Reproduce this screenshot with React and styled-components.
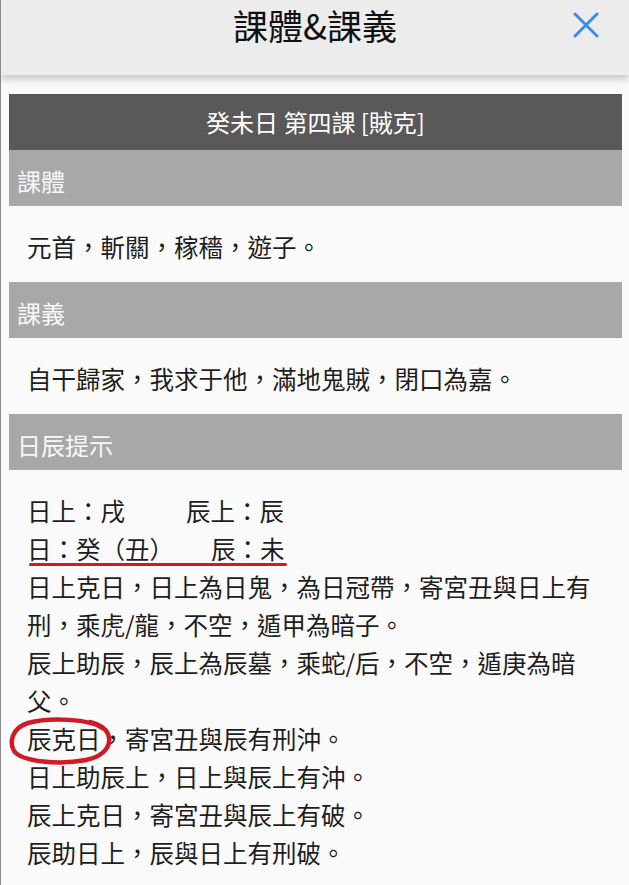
import styled, { createGlobalStyle } from "styled-components";

const GlobalStyle = createGlobalStyle`
    html, body {
        margin: 0;
        padding: 0;
        background: #fafafa;
    }
    body {
        font-family: "Noto Sans CJK TC", Roboto, "Noto Sans", sans-serif;
        color: #1e1e1e;
    }
`;

const Page = styled.div`
    min-height: 885px;
    border-left: 1px solid #8a8a8a;
    background: #fafafa;
    overflow: hidden;
`;

const Header = styled.div`
    position: relative;
    height: 75px;
    background: #ececec;
    box-shadow: 0 4px 8px rgba(0, 0, 0, 0.22);
    display: flex;
    justify-content: center;
`;

const HeaderTitle = styled.div`
    font-size: 35px;
    line-height: 50px;
    color: #111;
`;

const CloseButton = styled.div`
    position: absolute;
    right: 30px;
    top: 12px;
    width: 26px;
    height: 26px;
    cursor: pointer;
`;

const Panel = styled.div`
    margin: 19px 7px 0 8px;
`;

const LessonBar = styled.div`
    height: 56px;
    background: #595959;
    color: #fff;
    font-size: 24px;
    display: flex;
    align-items: center;
    justify-content: center;
    padding-bottom: 2px;
    box-sizing: border-box;
`;

const SectionBar = styled.div`
    height: 56px;
    background: #a8a8a8;
    color: #f8f8f8;
    font-size: 24px;
    display: flex;
    align-items: center;
    padding: 4px 0 0 8px;
    box-sizing: border-box;
`;

const SectionBody = styled.div`
    padding: ${p => (p.tall ? "22px" : "22px")} 18px ${p => (p.tall ? "30px" : "16px")} 18px;
    font-size: 24.5px;
    line-height: 38px;
    color: #1e1e1e;
`;

const Line = styled.div`
    position: relative;
`;

const Gap = styled.span`
    display: inline-block;
    width: ${p => p.w}px;
`;

const Underlined = styled.span`
    position: relative;
    display: inline-block;
    &::after {
        content: "";
        position: absolute;
        left: 2px;
        right: -2px;
        bottom: 2px;
        height: 3px;
        border-radius: 2px;
        background: #d11a28;
    }
`;

const Circled = styled.span`
    position: relative;
    display: inline-block;
`;

const Ring = styled.svg`
    position: absolute;
    left: -17px;
    top: -2px;
    width: 102px;
    height: 46px;
    overflow: visible;
    pointer-events: none;
`;

function CloseIcon() {
    return (
        <svg width="26" height="26" viewBox="0 0 26 26">
            <path
                d="M2 2 L24 24 M24 2 L2 24"
                stroke="#3a8de0"
                strokeWidth="3"
                strokeLinecap="round"
            />
        </svg>
    );
}

function RedRing() {
    return (
        <Ring viewBox="0 0 102 46">
            <path
                d="M92 10 C80 1 40 -1 18 5 C2 10 -1 24 4 33 C12 44 50 47 76 42 C96 38 102 26 98 16 C95 9 88 6 80 4"
                fill="none"
                stroke="#d11a28"
                strokeWidth="4.5"
                strokeLinecap="round"
            />
        </Ring>
    );
}

const hints = [
    "日上克日，日上為日鬼，為日冠帶，寄宮丑與日上有刑，乘虎/龍，不空，遁甲為暗子。",
    "辰上助辰，辰上為辰墓，乘蛇/后，不空，遁庚為暗父。",
];

const tail = [
    "日上助辰上，日上與辰上有沖。",
    "辰上克日，寄宮丑與辰上有破。",
    "辰助日上，辰與日上有刑破。",
];

function App() {
    return (
        <Page>
            <GlobalStyle />
            <Header>
                <HeaderTitle>課體&amp;課義</HeaderTitle>
                <CloseButton>
                    <CloseIcon />
                </CloseButton>
            </Header>
            <Panel>
                <LessonBar>癸未日 第四課 [賊克]</LessonBar>
                <SectionBar>課體</SectionBar>
                <SectionBody>元首，斬關，稼穡，遊子。</SectionBody>
                <SectionBar>課義</SectionBar>
                <SectionBody>自干歸家，我求于他，滿地鬼賊，閉口為嘉。</SectionBody>
                <SectionBar>日辰提示</SectionBar>
                <SectionBody tall>
                    <Line>
                        日上：戌<Gap w={61} />辰上：辰
                    </Line>
                    <Line>
                        <Underlined>
                            日：癸（丑）<Gap w={37} />辰：未
                        </Underlined>
                    </Line>
                    {hints.map((t, i) => (
                        <Line key={i}>{t}</Line>
                    ))}
                    <Line>
                        <Circled>
                            辰克日
                            <RedRing />
                        </Circled>
                        ，寄宮丑與辰有刑沖。
                    </Line>
                    {tail.map((t, i) => (
                        <Line key={i}>{t}</Line>
                    ))}
                </SectionBody>
            </Panel>
        </Page>
    );
}

export default App;
